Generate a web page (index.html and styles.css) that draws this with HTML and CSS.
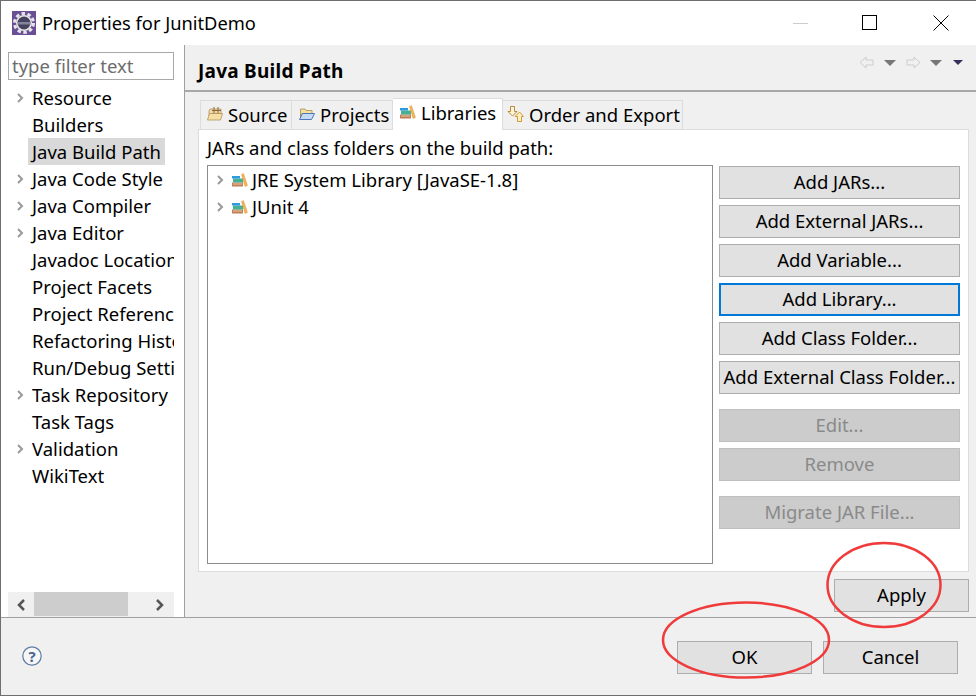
FILE: index.html
```html
<!DOCTYPE html>
<html lang="en">
<head>
<meta charset="utf-8">
<title>Properties for JunitDemo</title>
<link rel="stylesheet" href="styles.css">
</head>
<body>
<svg width="0" height="0" class="defs">
  <symbol id="lib" viewBox="0 0 16 14">
    <rect x="0" y="9.500" width="11" height="4" fill="#c08055"/>
    <rect x="1" y="10.500" width="9" height="1" fill="#ecc4a8"/>
    <rect x="1" y="5.500" width="10" height="4" fill="#45b094"/>
    <rect x="0" y="3" width="8" height="2.500" fill="#2f9ae0"/>
    <path d="M9.500 1.500 L11.500 0.500 L15.500 12.500 L13 13.500 Z" fill="#f2b255" stroke="#d8953a" stroke-width="0.400"/>
  </symbol>
  <symbol id="chev" viewBox="0 0 8 12">
    <path d="M2 2 L6 6 L2 10" fill="none" stroke="#999" stroke-width="2"/>
  </symbol>
</svg>
<div class="window">
  <header class="titlebar">
    <svg class="appicon" width="24" height="24" viewBox="0 0 24 24">
      <rect width="24" height="24" fill="#6a4f96"/>
      <circle cx="12" cy="12" r="9.500" fill="none" stroke="#e6e6e6" stroke-width="3" stroke-dasharray="3.500 2.500"/>
      <circle cx="12" cy="12" r="8" fill="#e8e8e8"/>
      <circle cx="12" cy="12" r="6.500" fill="#45425f"/>
      <rect x="6" y="11" width="12" height="2.500" fill="#85829e"/>
    </svg>
    <span class="title">Properties for JunitDemo</span>
    <div class="winctl">
      <svg class="winmin" width="16" height="16" viewBox="0 0 16 16"><path d="M0 8.500H15" stroke="#ccc"/></svg>
      <svg width="16" height="16" viewBox="0 0 16 16"><rect x="0.500" y="0.500" width="14" height="14" fill="none" stroke="#000"/></svg>
      <svg width="16" height="16" viewBox="0 0 16 16"><path d="M0.500 0.500L15.500 15.500M15.500 0.500L0.500 15.500" stroke="#000"/></svg>
    </div>
  </header>
  <div class="body">
    <aside class="sidebar">
      <input class="filter" type="text" placeholder="type filter text">
      <ul class="tree">
        <li class="node"><svg class="chev"><use href="#chev"/></svg><span>Resource</span></li>
        <li class="node"><span>Builders</span></li>
        <li class="node"><span class="selected">Java Build Path</span></li>
        <li class="node"><svg class="chev"><use href="#chev"/></svg><span>Java Code Style</span></li>
        <li class="node"><svg class="chev"><use href="#chev"/></svg><span>Java Compiler</span></li>
        <li class="node"><svg class="chev"><use href="#chev"/></svg><span>Java Editor</span></li>
        <li class="node"><span>Javadoc Location</span></li>
        <li class="node"><span>Project Facets</span></li>
        <li class="node"><span>Project References</span></li>
        <li class="node"><span>Refactoring History</span></li>
        <li class="node"><span>Run/Debug Settings</span></li>
        <li class="node"><svg class="chev"><use href="#chev"/></svg><span>Task Repository</span></li>
        <li class="node"><span>Task Tags</span></li>
        <li class="node"><svg class="chev"><use href="#chev"/></svg><span>Validation</span></li>
        <li class="node"><span>WikiText</span></li>
      </ul>
      <div class="hscroll">
        <svg class="arrow" width="12" height="14" viewBox="0 0 12 14"><path d="M9 2L4 7L9 12" fill="none" stroke="#555" stroke-width="2.500"/></svg>
        <div class="thumb"></div>
        <svg class="arrow" width="12" height="14" viewBox="0 0 12 14"><path d="M3 2L8 7L3 12" fill="none" stroke="#555" stroke-width="2.500"/></svg>
      </div>
    </aside>
    <main class="page">
      <div class="pagehead">
        <h1 class="pagetitle">Java Build Path</h1>
        <div class="nav">
          <svg width="15" height="13" viewBox="0 0 15 13"><path d="M1 6.500L7 1V4H14V9H7V12Z" fill="#f0f0f0" stroke="#ccc"/></svg>
          <svg class="drop" width="12" height="6" viewBox="0 0 12 6"><path d="M0 0H12L6 6Z" fill="#777"/></svg>
          <svg class="navnext" width="15" height="13" viewBox="0 0 15 13"><path d="M14 6.500L8 1V4H1V9H8V12Z" fill="#f0f0f0" stroke="#ccc"/></svg>
          <svg class="drop2" width="12" height="6" viewBox="0 0 12 6"><path d="M0 0H12L6 6Z" fill="#777"/></svg>
          <svg class="dropdark" width="10" height="5" viewBox="0 0 10 5"><path d="M0 0H10L5 5Z" fill="#3a2f5a"/></svg>
        </div>
      </div>
      <div class="tabs">
        <div class="tab t1">
          <svg width="16" height="16" viewBox="0 0 16 16"><path d="M2 5L3 3H14V10H2Z" fill="#f0d9a8" stroke="#b8935a" stroke-width="0.800"/><path d="M7 1V9M11 1V9M5 4.500H14M5 7.500H14" stroke="#8a6a3a" fill="none"/><path d="M0.500 14L2.500 7.500H15.500L13.500 14Z" fill="#f6dfa5" stroke="#b8935a" stroke-width="0.800"/></svg>
          <span>Source</span>
        </div>
        <div class="tab t2">
          <svg width="16" height="16" viewBox="0 0 16 16"><path d="M1.500 13V3H6L7 4.500H13V8H1.500Z" fill="#f5dfa3" stroke="#a8904a" stroke-width="0.800"/><path d="M0.500 13.500L3.500 7.500H15.500L12.500 13.500Z" fill="#c4dbf5" stroke="#4f78b5"/></svg>
          <span>Projects</span>
        </div>
        <div class="tab t3 active">
          <svg width="16" height="14"><use href="#lib"/></svg>
          <span>Libraries</span>
        </div>
        <div class="tab t4">
          <svg width="17" height="18" viewBox="0 0 17 18"><path d="M3.500 1.500H7.500V6.500H10L5.500 11L1 6.500H3.500Z" fill="#fff6d8" stroke="#b88a3a"/><path d="M10.500 16.500V11.500H8L12.500 7L16.500 11.500H14.500V16.500Z" fill="#fff0c0" stroke="#d09a3a"/></svg>
          <span>Order and Export</span>
        </div>
      </div>
      <section class="panel">
        <p class="caption">JARs and class folders on the build path:</p>
        <div class="columns">
          <div class="libtree">
            <div class="libnode"><svg class="chev"><use href="#chev"/></svg><svg width="16" height="14"><use href="#lib"/></svg><span>JRE System Library [JavaSE-1.8]</span></div>
            <div class="libnode"><svg class="chev"><use href="#chev"/></svg><svg width="16" height="14"><use href="#lib"/></svg><span>JUnit 4</span></div>
          </div>
          <div class="buttons">
            <button class="btn" type="button">Add JARs...</button>
            <button class="btn" type="button">Add External JARs...</button>
            <button class="btn" type="button">Add Variable...</button>
            <button class="btn focus" type="button">Add Library...</button>
            <button class="btn" type="button">Add Class Folder...</button>
            <button class="btn" type="button">Add External Class Folder...</button>
            <button class="btn off sep" type="button">Edit...</button>
            <button class="btn off" type="button">Remove</button>
            <button class="btn off sep" type="button">Migrate JAR File...</button>
          </div>
        </div>
      </section>
      <div class="applyrow"><button class="btn wide" type="button">Apply</button></div>
    </main>
  </div>
  <footer class="footer">
    <svg class="help" width="20" height="20" viewBox="0 0 20 20"><circle cx="10" cy="10" r="9.200" fill="#f6f6f6" stroke="#5f7ba3" stroke-width="1.200"/><text x="10" y="15.500" text-anchor="middle" class="helpq">?</text></svg>
    <div class="footbtns">
      <button class="btn wide" type="button">OK</button>
      <button class="btn wide" type="button">Cancel</button>
    </div>
  </footer>
  <svg class="annot" width="976" height="696" viewBox="0 0 976 696">
    <ellipse cx="884" cy="585" rx="56.500" ry="42" fill="none" stroke="#ef3b3b" stroke-width="2.500"/>
    <ellipse cx="746" cy="640" rx="83" ry="37.500" fill="none" stroke="#ef3b3b" stroke-width="2.500"/>
  </svg>
</div>
</body>
</html>
```
FILE: styles.css
```css
* { box-sizing: border-box; }
html, body { margin: 0; padding: 0; }
body {
  width: 976px;
  height: 696px;
  overflow: hidden;
  font-family: "Noto Sans", "Open Sans", sans-serif;
  font-size: 18.5px;
  color: #000;
  background: #fff;
}
.defs { position: absolute; }
.window {
  position: relative;
  width: 976px;
  height: 696px;
  display: flex;
  flex-direction: column;
  border: 1px solid #6e6e6e;
  border-right: 0;
  background: #fff;
}
.titlebar {
  height: 44px;
  flex: none;
  display: flex;
  align-items: center;
  padding: 0 0 1px 11px;
  background: #fff;
}
.appicon { margin-right: 6px; }
.title { font-size: 18.3px; margin-bottom: 1px; }
.winctl {
  margin-left: auto;
  display: flex;
  gap: 55px;
  padding-right: 27px;
  align-items: center;
}
.winmin { margin-right: -2px; }
.body { flex: 1; display: flex; min-height: 0; }
.sidebar {
  width: 184px;
  flex: none;
  display: flex;
  flex-direction: column;
  background: #fff;
  padding: 7px 0 0 7px;
  border-right: 1px solid #a0a0a0;
}
.filter {
  width: 166px;
  height: 28px;
  flex: none;
  border: 1px solid #a8a8a8;
  padding: 0 3px 2px;
  font: inherit;
  outline: none;
}
.filter::placeholder { color: #6d6d6d; opacity: 1; }
.tree {
  list-style: none;
  margin: 4px 0 0;
  padding: 0;
  width: 166px;
  flex: 1;
  overflow: hidden;
}
.node {
  height: 27px;
  padding-left: 24px;
  position: relative;
  display: flex;
  align-items: center;
  white-space: nowrap;
}
.node .chev { position: absolute; left: 8px; top: 8px; }
.chev { width: 8px; height: 12px; flex: none; }
.selected { background: #d9d9d9; margin-left: -4px; padding: 0 4px; line-height: 27px; }
.hscroll {
  width: 166px;
  height: 25px;
  flex: none;
  background: #f0f0f0;
  display: flex;
  align-items: center;
  justify-content: space-between;
  padding: 0 8px 0 7px;
  position: relative;
}
.thumb { position: absolute; left: 26px; top: 0; width: 94px; height: 24px; background: #cdcdcd; }
.page {
  flex: 1;
  display: flex;
  flex-direction: column;
  background: #f0f0f0;
  min-width: 0;
}
.pagehead {
  height: 47px;
  flex: none;
  display: flex;
  align-items: flex-start;
  justify-content: space-between;
  border-bottom: 2px solid #a8a8a8;
  padding: 0 0 0 13px;
}
.pagetitle { margin: 13px 0 0; font-size: 19px; font-weight: 700; letter-spacing: 0.25px; }
.nav { display: flex; align-items: center; padding: 11px 13px 0 0; }
.drop { margin-left: 10px; }
.navnext { margin-left: 10px; }
.drop2 { margin-left: 9px; }
.dropdark { margin-left: 11px; }
.tabs {
  display: flex;
  align-items: flex-end;
  height: 37px;
  flex: none;
  padding-left: 15px;
}
.tab {
  height: 29px;
  background: #f0f0f0;
  border: 1px solid #dcdcdc;
  border-bottom: 0;
  display: flex;
  align-items: center;
  gap: 5px;
  padding-left: 6px;
  padding-bottom: 2px;
  white-space: nowrap;
}
.tab + .tab { border-left: 0; }
.t1 { width: 92px; }
.t2 { width: 101px; padding-left: 7px; }
.t3 { width: 110px; padding-left: 7px; }
.t4 { width: 180px; padding-left: 4px; }
.active { background: #fff; height: 32px; padding-bottom: 5px; margin-bottom: -1px; position: relative; }
.panel {
  height: 443px;
  flex: none;
  margin: 0 7px 0 13px;
  background: #fff;
  border: 1px solid #dcdcdc;
  padding: 0 8px 7px 8px;
  display: flex;
  flex-direction: column;
}
.caption { margin: 6px 0 5px; line-height: 24px; }
.columns { display: flex; flex: 1; gap: 6px; min-height: 0; }
.libtree {
  width: 506px;
  flex: none;
  border: 1px solid #8c8c8c;
  padding: 0 0 0 8px;
}
.libnode { height: 27px; display: flex; align-items: center; gap: 4px; white-space: nowrap; }
.libnode .chev { margin-right: 4px; }
.buttons { display: flex; flex-direction: column; gap: 6px; width: 241px; padding-top: 1px; }
.btn {
  height: 33px;
  width: 241px;
  flex: none;
  font: inherit;
  color: #000;
  background: #e1e1e1;
  border: 1px solid #adadad;
  padding: 0 0 2px;
  white-space: nowrap;
}
.focus { border: 2px solid #0078d7; }
.off { background: #cccccc; border-color: #bfbfbf; color: #8a8a8a; }
.sep { margin-top: 9px; }
.wide { width: 135px; }
.applyrow { display: flex; justify-content: flex-end; padding: 7px 7px 0 0; }
.footer {
  height: 78px;
  flex: none;
  background: #f0f0f0;
  border-top: 1px solid #a0a0a0;
  display: flex;
  align-items: flex-start;
  justify-content: space-between;
  padding: 23px 18px 0 21px;
}
.help { margin-top: 5px; }
.helpq { font-size: 15px; font-weight: 700; fill: #4a6590; }
.footbtns { display: flex; gap: 11px; }
.annot { position: absolute; left: -1px; top: -1px; pointer-events: none; }
```
